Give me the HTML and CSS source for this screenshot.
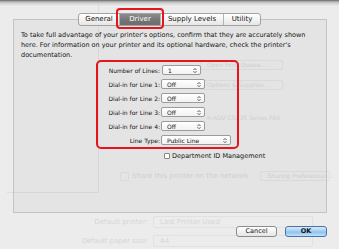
FILE: index.html
```html
<!DOCTYPE html>
<html lang="en">
  <head>
    <meta charset="utf-8">
    <title>Printer Options - Driver</title>
    <link rel="stylesheet" href="styles.css">
  </head>
  <body>
    <div class="screen">
      <!-- window behind the sheet, seen faintly through it -->
      <div class="backdrop">
        <div class="sidebar"></div>
        <div class="info">
          <span class="ghost-btn">Open Print Queue...</span>
          <span class="ghost-btn">Options &amp; Supplies...</span>
          <div class="ghost-kind">R-ADV C5235 Series FAX</div>
          <div class="ghost-share">
            <span class="ghost-check"></span>
            <span class="ghost-share-text">Share this printer on the network</span>
            <span class="ghost-btn wide">Sharing Preferences...</span>
          </div>
        </div>
        <div class="defaults">
          <div class="ghost-row"><span class="ghost-label">Default printer:</span><span class="ghost-pop">Last Printer Used</span></div>
          <div class="ghost-row"><span class="ghost-label">Default paper size:</span><span class="ghost-pop">A4</span></div>
        </div>
      </div>

      <div class="sheet">
        <div class="tabs">
          <div class="tab first t-general">General</div>
          <div class="tab active t-driver">Driver</div>
          <div class="tab t-supply">Supply Levels</div>
          <div class="tab t-utility">Utility</div>
        </div>
        <div class="panel">
          <p class="intro">To take full advantage of your printer's options, confirm that they are accurately shown here. For information on your printer and its optional hardware, check the printer's documentation.</p>
          <div class="options">
            <span class="label">Number of Lines:</span>
            <span class="popup w-num">1<svg width="4" height="7" viewBox="0 0 4 7"><path d="M.5 3 2 1.5 3.5 3M.5 4.2 2 5.7 3.5 4.2" fill="none" stroke="#333" stroke-width=".8"/></svg></span>
            <span class="label">Dial-in for Line 1:</span>
            <span class="popup w-dial">Off<svg width="4" height="7" viewBox="0 0 4 7"><path d="M.5 3 2 1.5 3.5 3M.5 4.2 2 5.7 3.5 4.2" fill="none" stroke="#333" stroke-width=".8"/></svg></span>
            <span class="label">Dial-in for Line 2:</span>
            <span class="popup w-dial">Off<svg width="4" height="7" viewBox="0 0 4 7"><path d="M.5 3 2 1.5 3.5 3M.5 4.2 2 5.7 3.5 4.2" fill="none" stroke="#333" stroke-width=".8"/></svg></span>
            <span class="label">Dial-in for Line 3:</span>
            <span class="popup w-dial">Off<svg width="4" height="7" viewBox="0 0 4 7"><path d="M.5 3 2 1.5 3.5 3M.5 4.2 2 5.7 3.5 4.2" fill="none" stroke="#333" stroke-width=".8"/></svg></span>
            <span class="label">Dial-in for Line 4:</span>
            <span class="popup w-dial">Off<svg width="4" height="7" viewBox="0 0 4 7"><path d="M.5 3 2 1.5 3.5 3M.5 4.2 2 5.7 3.5 4.2" fill="none" stroke="#333" stroke-width=".8"/></svg></span>
            <span class="label">Line Type:</span>
            <span class="popup w-type">Public Line<svg width="4" height="7" viewBox="0 0 4 7"><path d="M.5 3 2 1.5 3.5 3M.5 4.2 2 5.7 3.5 4.2" fill="none" stroke="#333" stroke-width=".8"/></svg></span>
          </div>
          <div class="dept"><span class="check"></span>Department ID Management</div>
        </div>
        <div class="buttons">
          <span class="btn">Cancel</span>
          <span class="btn primary">OK</span>
        </div>
      </div>
    </div>
  </body>
</html>
```

FILE: styles.css
```css
body {
  margin: 0px;
  background-color: #ececec;
}
.screen {
  position: relative;
  width: 339px;
  height: 249px;
  overflow: hidden;
  font-family: "DejaVu Sans", Verdana, sans-serif;
}

/* faded window behind */
.backdrop {
  display: grid;
  grid-template-columns: 99px 240px;
  grid-template-rows: 193px 56px;
  background-color: #ececec;
  color: #d6d6d6;
  font-size: 6px;
}
.sidebar {
  margin-left: 7px;
  border-right: 1px solid #dedede;
  border-bottom: 1px solid #dedede;
}
.info {
  display: flex;
  flex-direction: column;
  align-items: flex-start;
  padding-top: 60px;
}
.ghost-btn {
  margin-left: 101px;
  margin-bottom: 10px;
  width: 83px;
  height: 10px;
  box-sizing: border-box;
  border: 1px solid #e1e1e1;
  border-radius: 2px;
  padding-left: 6px;
  line-height: 8px;
  white-space: nowrap;
}
.ghost-kind {
  margin: 14px 0 0 108px;
  line-height: 8px;
  white-space: nowrap;
}
.ghost-share {
  display: flex;
  align-items: center;
  margin: 49px 0 0 21px;
  font-size: 7px;
  white-space: nowrap;
}
.ghost-check {
  width: 7px;
  height: 7px;
  border: 1px solid #e0e0e0;
  border-radius: 2px;
  margin-right: 3px;
}
.ghost-btn.wide {
  margin: 0 0 0 12px;
  width: 70px;
  font-size: 6px;
}
.defaults {
  grid-column: 1 / -1;
  display: flex;
  flex-direction: column;
  gap: 7px;
  padding-top: 23px;
}
.ghost-row {
  display: flex;
  align-items: center;
  gap: 5px;
}
.ghost-label {
  width: 148px;
  text-align: right;
  font-size: 7px;
}
.ghost-pop {
  width: 160px;
  height: 12px;
  box-sizing: border-box;
  border: 1px solid #e1e1e1;
  border-radius: 2px;
  padding-left: 6px;
  line-height: 10px;
  font-size: 7px;
}

/* the sheet */
.sheet {
  position: absolute;
  top: 0px;
  left: 0px;
  right: 0px;
  bottom: 0px;
  display: flex;
  flex-direction: column;
  color: #141414;
  background: linear-gradient(to bottom, #5e5e5e 0px, #9c9c9c 1px, #cfcfcf 3px, rgba(236, 236, 236, 0) 6px);
}
.tabs {
  position: relative;
  z-index: 1;
  align-self: center;
  display: flex;
  margin-top: 13px;
  height: 13px;
  box-sizing: border-box;
  border: 1px solid #a3a3a3;
  border-radius: 3px;
  background: linear-gradient(#ffffff, #f3f3f3 50%, #e6e6e6);
}
.tab {
  font-size: 7px;
  line-height: 11px;
  text-align: center;
  border-left: 1px solid #b4b4b4;
  white-space: nowrap;
}
.tab.first {
  border-left: none;
}
.t-general { width: 40px; }
.t-driver { width: 40px; }
.t-supply { width: 62px; }
.t-utility { width: 36px; }
.tab.active {
  position: relative;
  background: linear-gradient(#8e8e8e, #767676 50%, #6c6c6c);
  color: #ffffff;
}
.tab.active::after {
  content: "";
  position: absolute;
  left: -4px;
  right: -4px;
  top: -6px;
  bottom: -4px;
  border: 2px solid #e5141d;
  border-radius: 4px;
}
.panel {
  margin: -7px 12px 0px 13px;
  height: 194px;
  box-sizing: border-box;
  border: 1px solid #c4c4c4;
  background-color: rgba(0, 0, 0, 0.03);
  padding: 10px 8px 0px 7px;
}
.intro {
  margin: 0px;
  font-size: 6.5px;
  line-height: 10px;
}
.options {
  display: grid;
  grid-template-columns: 60px auto;
  grid-auto-rows: 10px;
  row-gap: 4px;
  column-gap: 2px;
  align-items: center;
  margin-left: 75px;
  width: 143px;
  box-sizing: border-box;
  border: 2px solid #e5141d;
  border-radius: 5px;
  padding: 3px 6px 2px 2px;
}
.label {
  justify-self: end;
  font-size: 6px;
  white-space: nowrap;
}
.popup {
  justify-self: start;
  display: flex;
  align-items: center;
  justify-content: space-between;
  height: 10px;
  box-sizing: border-box;
  border: 1px solid #9b9b9b;
  border-radius: 2px;
  background: linear-gradient(#ffffff, #f2f2f2);
  padding: 0px 3px 0px 5px;
  font-size: 6px;
}
.w-num { width: 39px; }
.w-dial { width: 44px; margin-left: -1px; }
.w-type { width: 70px; margin-left: -1px; }
.dept {
  display: flex;
  align-items: center;
  gap: 2px;
  margin: 3px 0px 0px 143px;
  font-size: 6.5px;
}
.check {
  width: 6px;
  height: 6px;
  box-sizing: border-box;
  border: 1px solid #858585;
  border-radius: 1px;
  background-color: #ffffff;
}
.buttons {
  display: flex;
  justify-content: flex-end;
  gap: 8px;
  margin: 13px 12px 0px 0px;
}
.btn {
  width: 41px;
  height: 11px;
  box-sizing: border-box;
  border: 1px solid #8c8c8c;
  border-radius: 3px;
  background: linear-gradient(#ffffff, #f2f2f2 50%, #e5e5e5);
  font-size: 6.5px;
  line-height: 9px;
  text-align: center;
}
.btn.primary {
  width: 42px;
  border-color: #4c74a3;
  background: linear-gradient(#d6eafb, #a6d0f3 45%, #8bc1ef 55%, #c1e1fb);
  font-weight: bold;
}
```
